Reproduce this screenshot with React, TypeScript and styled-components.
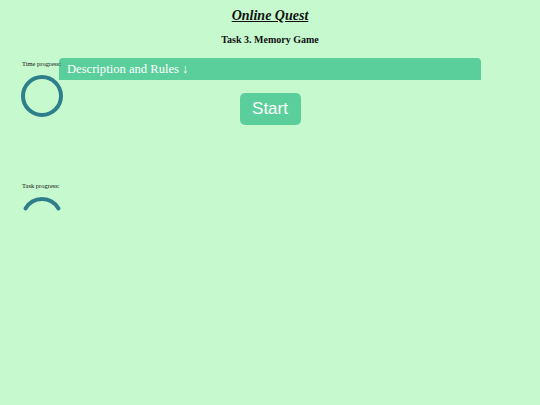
import styled, { createGlobalStyle } from 'styled-components';

const GlobalStyle = createGlobalStyle`
  html, body {
    margin: 0;
    padding: 0;
    background: #c6f9ce;
  }
  body {
    font-family: 'Liberation Serif', 'Times New Roman', serif;
    color: #111;
  }
`;

const RING_COLOR = '#2f7e8b';

const ProgressRing = ({ arc }: { arc?: boolean }) => {
  // arc: only the top part of the ring (from 150deg to 30deg)
  const r = 19;
  const c = 21;
  const a1 = (150 * Math.PI) / 180;
  const a2 = (30 * Math.PI) / 180;
  const x1 = c + r * Math.cos(a1);
  const y1 = c - r * Math.sin(a1);
  const x2 = c + r * Math.cos(a2);
  const y2 = c - r * Math.sin(a2);

  return (
    <S.Ring width="42" height="42" viewBox="0 0 42 42">
      {arc ? (
        <path
          d={`M ${x1} ${y1} A ${r} ${r} 0 0 1 ${x2} ${y2}`}
          fill="none"
          stroke={RING_COLOR}
          strokeWidth="4"
          strokeLinecap="round"
        />
      ) : (
        <circle cx={c} cy={c} r={r} fill="none" stroke={RING_COLOR} strokeWidth="4" />
      )}
    </S.Ring>
  );
};

const App = () => {
  return (
    <S.Page>
      <GlobalStyle />
      <S.Header>
        <S.Title>Online Quest</S.Title>
        <S.Subtitle>Task 3. Memory Game</S.Subtitle>
      </S.Header>

      <S.Body>
        <S.Sidebar>
          <S.Label>Time progress:</S.Label>
          <ProgressRing />
          <S.Label $gap={65}>Task progress:</S.Label>
          <ProgressRing arc />
        </S.Sidebar>

        <S.Main>
          <S.RulesBar>Description and Rules ↓</S.RulesBar>
          <S.StartButton>Start</S.StartButton>
        </S.Main>
      </S.Body>
    </S.Page>
  );
};

const S = {
  Page: styled.div`
    width: 540px;
    min-height: 405px;
    background: #c6f9ce;
  `,
  Header: styled.header`
    display: flex;
    flex-direction: column;
    align-items: center;
    padding-top: 8px;
  `,
  Title: styled.h1`
    margin: 0;
    font-size: 14px;
    line-height: 16px;
    font-weight: bold;
    font-style: italic;
    text-decoration: underline;
  `,
  Subtitle: styled.h2`
    margin: 10px 0 0;
    font-size: 10px;
    line-height: 12px;
    font-weight: bold;
  `,
  Body: styled.div`
    display: grid;
    grid-template-columns: 59px 1fr 59px;
    margin-top: 12px;
  `,
  Sidebar: styled.aside`
    position: relative;
    z-index: 1;
    display: flex;
    flex-direction: column;
    align-items: flex-start;
    padding: 2px 0 0 22px;
    overflow: visible;
  `,
  Label: styled.div<{ $gap?: number }>`
    font-size: 6.5px;
    line-height: 8px;
    white-space: nowrap;
    margin-top: ${({ $gap }) => $gap ?? 0}px;
    margin-bottom: 7px;
  `,
  Ring: styled.svg`
    display: block;
    flex-shrink: 0;
    margin-left: -1px;
  `,
  Main: styled.main`
    display: flex;
    flex-direction: column;
    align-items: center;
    gap: 13px;
  `,
  RulesBar: styled.div`
    align-self: stretch;
    height: 22px;
    padding-left: 8px;
    background: #5acf9b;
    border-radius: 4px 4px 0 0;
    color: #fff;
    font-size: 12.6px;
    line-height: 22px;
  `,
  StartButton: styled.button`
    width: 61px;
    height: 32px;
    padding: 0;
    border: none;
    border-radius: 5px;
    background: #5acf9b;
    color: #fff;
    font-family: 'Liberation Sans', Arial, sans-serif;
    font-size: 17px;
    cursor: pointer;
  `,
};

export default App;
